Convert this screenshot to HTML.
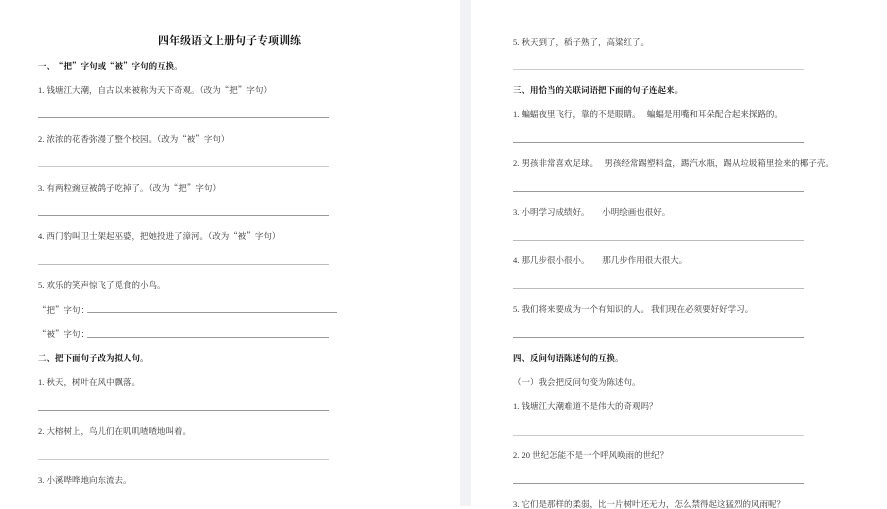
<!DOCTYPE html>
<html><head><meta charset="utf-8"><style>
body{margin:0;width:887px;height:506px;background:#fff;position:relative;overflow:hidden;font-family:"Liberation Serif","Noto Serif CJK SC",serif;color:#333;}
.t{position:absolute;font-size:8.5px;white-space:nowrap;line-height:10px;transform:translateY(-5px)}
.q{font-family:"Noto Serif CJK SC",serif}
.b{font-weight:bold;color:#111}
.l{position:absolute;height:1px;background:#999}
.gap{position:absolute;left:460px;top:0;width:11px;height:506px;background:#f1f2f6}
</style></head><body>
<div class="gap"></div>
<div class="t b" style="left:158px;top:42px;font-size:11px;transform:translateY(-6px)">四年级语文上册句子专项训练</div>
<div class="t b" style="left:38px;top:66px">一、<span class="q">“</span>把<span class="q">”</span>字句或<span class="q">“</span>被<span class="q">”</span>字句的互换。</div>
<div class="t" style="left:38px;top:90px">1. 钱塘江大潮，自古以来被称为天下奇观。（改为<span class="q">“</span>把<span class="q">”</span>字句）</div>
<div class="l" style="left:38px;top:117px;width:291px"></div>
<div class="t" style="left:38px;top:139px">2. 浓浓的花香弥漫了整个校园。（改为<span class="q">“</span>被<span class="q">”</span>字句）</div>
<div class="l" style="left:38px;top:166px;width:291px;background:#ccc"></div>
<div class="t" style="left:38px;top:188px">3. 有两粒豌豆被鸽子吃掉了。（改为<span class="q">“</span>把<span class="q">”</span>字句）</div>
<div class="l" style="left:38px;top:215px;width:291px"></div>
<div class="t" style="left:38px;top:236px">4. 西门豹叫卫士架起巫婆，把她投进了漳河。（改为<span class="q">“</span>被<span class="q">”</span>字句）</div>
<div class="l" style="left:38px;top:264px;width:291px;background:#bbb"></div>
<div class="t" style="left:38px;top:285px">5. 欢乐的笑声惊飞了觅食的小鸟。</div>
<div class="t" style="left:38px;top:310px"><span class="q">“</span>把<span class="q">”</span>字句：</div>
<div class="l" style="left:87px;top:312px;width:250px"></div>
<div class="t" style="left:38px;top:334px"><span class="q">“</span>被<span class="q">”</span>字句：</div>
<div class="l" style="left:87px;top:337px;width:242px"></div>
<div class="t b" style="left:38px;top:358px">二、把下面句子改为拟人句。</div>
<div class="t" style="left:38px;top:382px">1. 秋天，树叶在风中飘落。</div>
<div class="l" style="left:38px;top:410px;width:291px"></div>
<div class="t" style="left:38px;top:431px">2. 大榕树上，鸟儿们在叽叽喳喳地叫着。</div>
<div class="l" style="left:38px;top:459px;width:291px;background:#ccc"></div>
<div class="t" style="left:38px;top:480px">3. 小溪哗哗地向东流去。</div>

<div class="t" style="left:513px;top:42px">5. 秋天到了，稻子熟了，高粱红了。</div>
<div class="l" style="left:513px;top:69px;width:291px;background:#ccc"></div>
<div class="t b" style="left:513px;top:90px">三、用恰当的关联词语把下面的句子连起来。</div>
<div class="t" style="left:513px;top:114px">1. 蝙蝠夜里飞行，靠的不是眼睛。　 蝙蝠是用嘴和耳朵配合起来探路的。</div>
<div class="l" style="left:513px;top:142px;width:291px"></div>
<div class="t" style="left:513px;top:163px">2. 男孩非常喜欢足球。　 男孩经常踢塑料盒，踢汽水瓶，踢从垃圾箱里捡来的椰子壳。</div>
<div class="l" style="left:513px;top:191px;width:291px"></div>
<div class="t" style="left:513px;top:212px">3. 小明学习成绩好。　　小明绘画也很好。</div>
<div class="l" style="left:513px;top:240px;width:291px;background:#bbb"></div>
<div class="t" style="left:513px;top:260px">4. 那几步很小很小。　　那几步作用很大很大。</div>
<div class="l" style="left:513px;top:288px;width:291px;background:#bbb"></div>
<div class="t" style="left:513px;top:309px">5. 我们将来要成为一个有知识的人。 我们现在必须要好好学习。</div>
<div class="l" style="left:513px;top:337px;width:291px"></div>
<div class="t b" style="left:513px;top:358px">四、反问句语陈述句的互换。</div>
<div class="t" style="left:513px;top:382px">（一）我会把反问句变为陈述句。</div>
<div class="t" style="left:513px;top:406px">1. 钱塘江大潮难道不是伟大的奇观吗？</div>
<div class="l" style="left:513px;top:435px;width:291px;background:#ccc"></div>
<div class="t" style="left:513px;top:455px">2. 20 世纪怎能不是一个呼风唤雨的世纪？</div>
<div class="l" style="left:513px;top:483px;width:291px"></div>
<div class="t" style="left:513px;top:504px">3. 它们是那样的柔弱，比一片树叶还无力，怎么禁得起这猛烈的风雨呢？</div>
</body></html>
